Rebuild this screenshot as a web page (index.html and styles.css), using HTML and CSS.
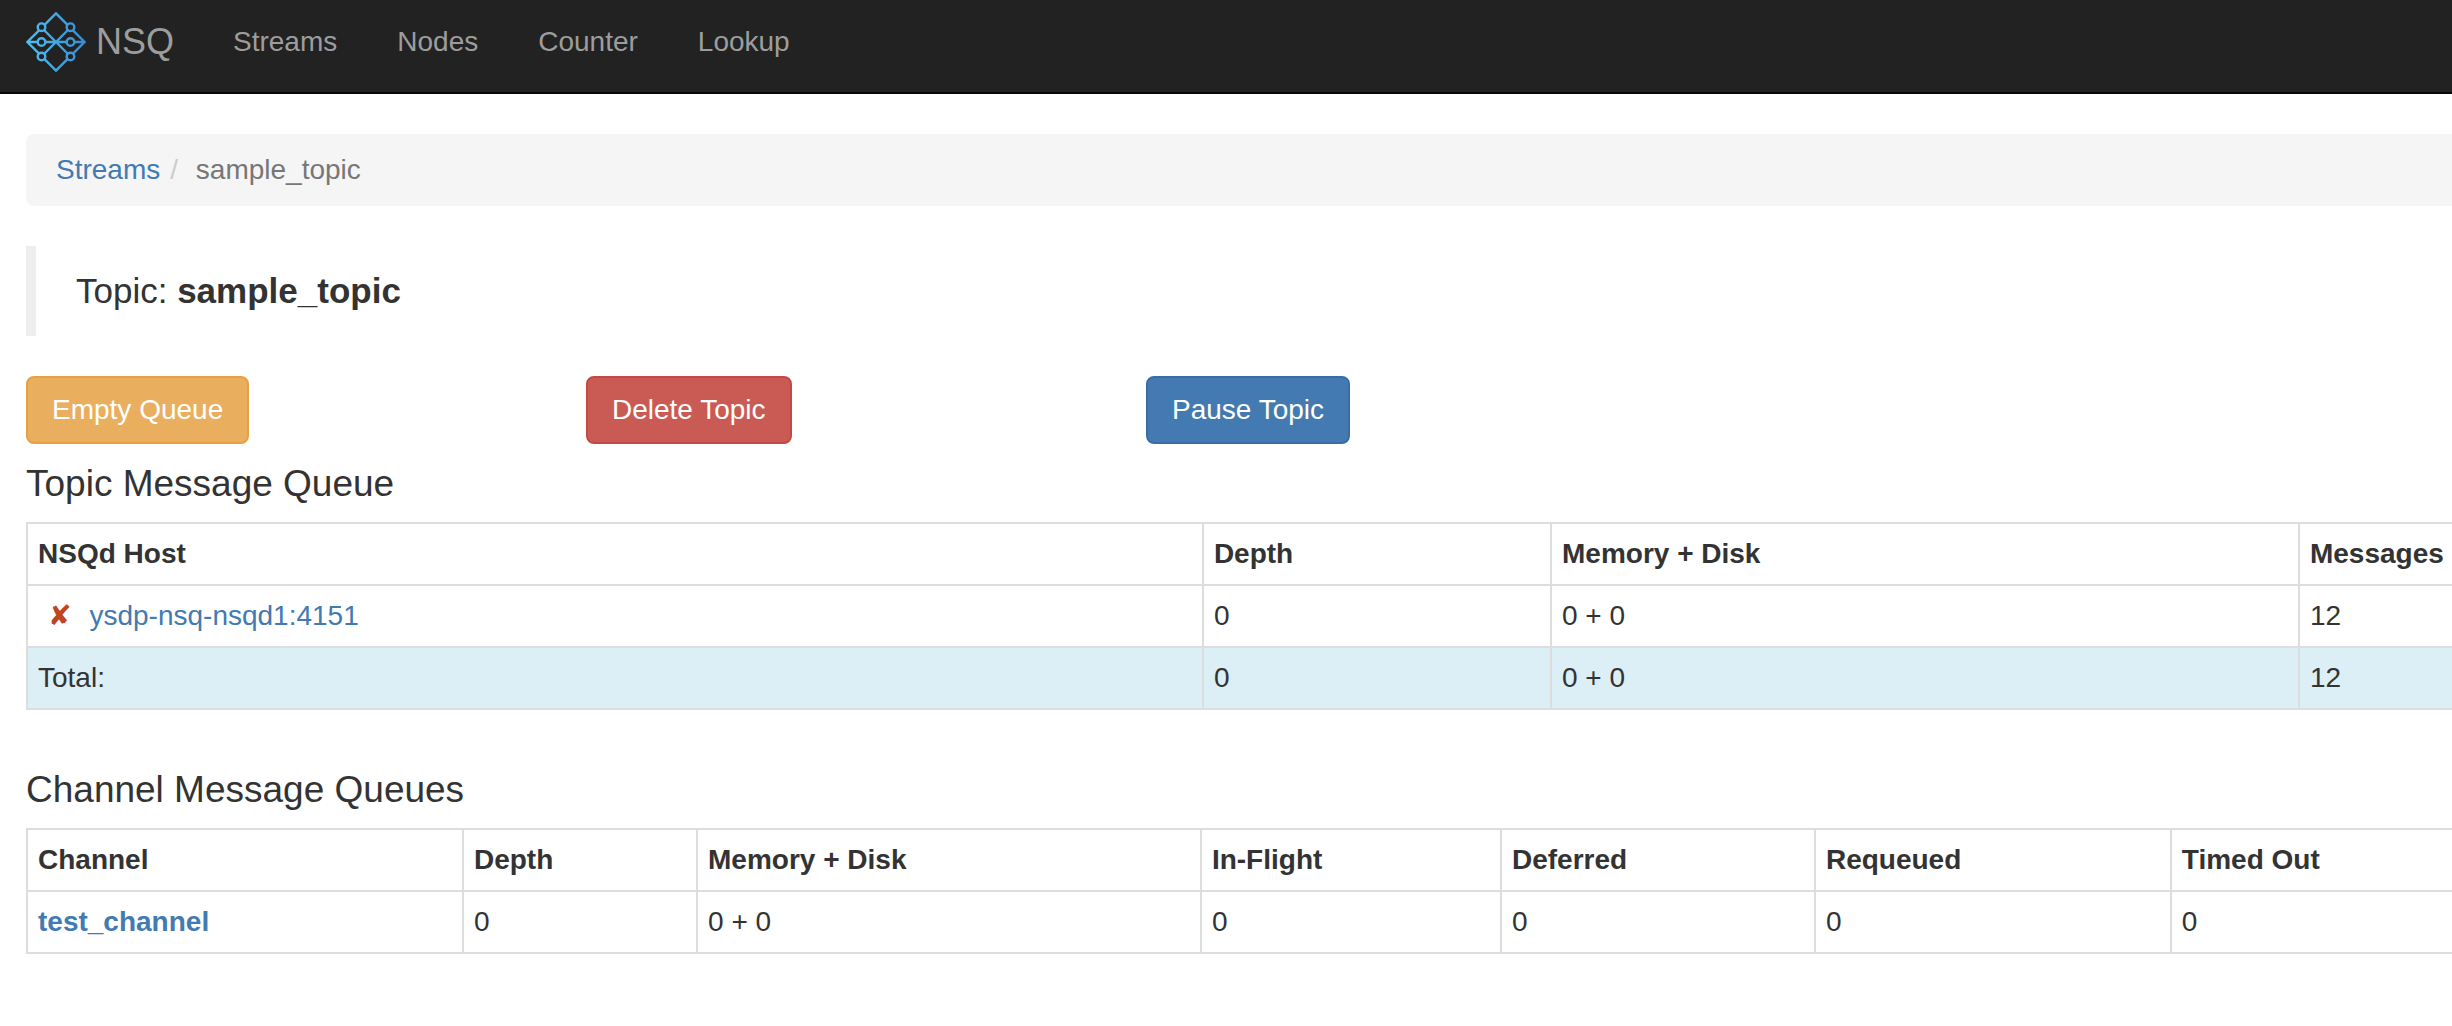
FILE: index.html
```html
<!DOCTYPE html>
<html lang="en">
<head>
  <meta charset="utf-8">
  <title>nsqadmin - sample_topic</title>
  <link rel="stylesheet" href="styles.css">
</head>
<body>
  <nav class="navbar">
    <a class="brand" href="#">
      <svg class="logo" viewBox="0 0 174 174" aria-hidden="true">
        <defs>
          <linearGradient id="logo-blue" gradientUnits="userSpaceOnUse" x1="0" y1="87" x2="174" y2="87">
            <stop offset="0" stop-color="#4fc0f2"/>
            <stop offset="1" stop-color="#378cd2"/>
          </linearGradient>
        </defs>
        <g fill="none" stroke="url(#logo-blue)" stroke-width="7">
          <path d="M87 4 L170 87 L87 170 L4 87 Z M2 87 H172 M45 45 L129 129 M129 45 L45 129"/>
          <g fill="#222">
            <circle cx="45" cy="44" r="11"/>
            <circle cx="129" cy="44" r="11"/>
            <circle cx="45" cy="87" r="11"/>
            <circle cx="129" cy="87" r="11"/>
            <circle cx="45" cy="129" r="11"/>
            <circle cx="129" cy="129" r="11"/>
          </g>
        </g>
      </svg>
      <span>NSQ</span>
    </a>
    <ul class="nav-list">
      <li><a href="#">Streams</a></li>
      <li><a href="#">Nodes</a></li>
      <li><a href="#">Counter</a></li>
      <li><a href="#">Lookup</a></li>
    </ul>
  </nav>

  <main class="container">
    <ol class="breadcrumb">
      <li><a href="#">Streams</a></li>
      <li class="active">sample_topic</li>
    </ol>

    <blockquote class="topic">Topic: <strong>sample_topic</strong></blockquote>

    <div class="actions">
      <div><button class="btn btn-warning" type="button">Empty Queue</button></div>
      <div><button class="btn btn-danger" type="button">Delete Topic</button></div>
      <div><button class="btn btn-primary" type="button">Pause Topic</button></div>
    </div>

    <h4 class="section-title">Topic Message Queue</h4>
    <table class="table topic-table">
      <colgroup><col class="host"><col class="depth"><col class="memory"><col></colgroup>
      <thead>
        <tr><th>NSQd Host</th><th>Depth</th><th>Memory + Disk</th><th>Messages</th></tr>
      </thead>
      <tbody>
        <tr>
          <td>
            <div class="host-cell">
              <button class="remove" type="button" aria-label="Remove host">✘</button>
              <a href="#">ysdp-nsq-nsqd1:4151</a>
            </div>
          </td>
          <td>0</td><td>0 + 0</td><td>12</td>
        </tr>
        <tr class="info"><td>Total:</td><td>0</td><td>0 + 0</td><td>12</td></tr>
      </tbody>
    </table>

    <h4 class="section-title">Channel Message Queues</h4>
    <table class="table channel-table">
      <colgroup><col class="channel"><col class="depth"><col class="memory"><col class="in-flight"><col class="deferred"><col class="requeued"><col></colgroup>
      <thead>
        <tr><th>Channel</th><th>Depth</th><th>Memory + Disk</th><th>In-Flight</th><th>Deferred</th><th>Requeued</th><th>Timed Out</th></tr>
      </thead>
      <tbody>
        <tr><th scope="row"><a href="#">test_channel</a></th><td>0</td><td>0 + 0</td><td>0</td><td>0</td><td>0</td><td>0</td></tr>
      </tbody>
    </table>
  </main>
</body>
</html>
```

FILE: styles.css
```css
* {
  box-sizing: border-box;
}

body {
  margin: 0;
  background: #fff;
  color: #333;
  font: 28px/40px "Helvetica Neue", Helvetica, "Liberation Sans", Arial, sans-serif;
}

a {
  color: #427ab1;
  text-decoration: none;
}

/* Top bar */
.navbar {
  display: flex;
  align-items: flex-start;
  padding-left: 26px;
  background: #222;
  border-bottom: 2px solid #080808;
}

.navbar a {
  color: #9d9d9d;
}

.brand {
  display: flex;
  align-items: center;
  gap: 10px;
  height: 92px;
  padding: 12px 29px 20px 0;
  font-size: 36px;
}

.logo {
  width: 60px;
  height: 60px;
}

.nav-list {
  display: flex;
  margin: 0;
  padding: 0;
  list-style: none;
}

.nav-list a {
  display: block;
  padding: 22px 30px 30px;
}

/* Page */
.container {
  padding: 40px 0 40px 26px;
}

.breadcrumb {
  display: flex;
  margin: 0 0 40px;
  padding: 16px 30px;
  background: #f5f5f5;
  border-radius: 8px 0 0 8px;
  list-style: none;
}

.breadcrumb .active {
  color: #777;
}

.breadcrumb li + li::before {
  content: "/\00a0";
  padding: 0 10px;
  color: #ccc;
}

.topic {
  margin: 0 0 40px;
  padding: 20px 40px;
  border-left: 10px solid #eee;
  font-size: 35px;
  line-height: 50px;
}

.actions {
  display: grid;
  grid-template-columns: repeat(auto-fill, 560px);
}

.btn {
  display: block;
  padding: 12px 24px;
  border: 2px solid;
  border-radius: 8px;
  color: #fff;
  font: inherit;
  white-space: nowrap;
}

.btn-warning {
  background: #e9af5f;
  border-color: #e6a144;
}

.btn-danger {
  background: #ca5b54;
  border-color: #c34a43;
}

.btn-primary {
  background: #427ab1;
  border-color: #396da3;
}

.section-title {
  margin: 20px 0 18px;
  font-size: 37px;
  font-weight: 500;
  line-height: 40px;
}

.table {
  width: 100%;
  margin-bottom: 60px;
  border-top: 2px solid #ddd;
  border-spacing: 0;
  table-layout: fixed;
}

.table th,
.table td {
  padding: 10px;
  border-left: 2px solid #ddd;
  border-bottom: 2px solid #ddd;
  text-align: left;
  white-space: nowrap;
}

.info td {
  background: #dceef6;
}

.host-cell {
  display: flex;
}

.remove {
  padding: 0 18px 0 10px;
  border: 0;
  background: none;
  color: #bf4420;
  font: bold 28px/40px "DejaVu Sans", sans-serif;
}

.topic-table .host { width: 48.47%; }
.topic-table .depth { width: 14.35%; }
.topic-table .memory { width: 30.83%; }

.channel-table .channel { width: 17.97%; }
.channel-table .depth { width: 9.65%; }
.channel-table .memory { width: 20.77%; }
.channel-table .in-flight { width: 12.37%; }
.channel-table .deferred { width: 12.94%; }
.channel-table .requeued { width: 14.67%; }
```
